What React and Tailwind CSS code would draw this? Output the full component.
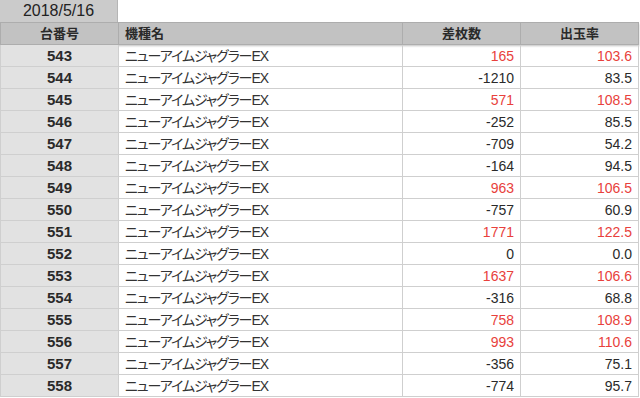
import React from 'react';

const rows = [
  [543, 165, '103.6'],
  [544, -1210, '83.5'],
  [545, 571, '108.5'],
  [546, -252, '85.5'],
  [547, -709, '54.2'],
  [548, -164, '94.5'],
  [549, 963, '106.5'],
  [550, -757, '60.9'],
  [551, 1771, '122.5'],
  [552, 0, '0.0'],
  [553, 1637, '106.6'],
  [554, -316, '68.8'],
  [555, 758, '108.9'],
  [556, 993, '110.6'],
  [557, -356, '75.1'],
  [558, -774, '95.7'],
];

const font = { fontFamily: '"Liberation Sans", "Noto Sans CJK JP", sans-serif' };

export default function App() {
  return (
    <div className="w-[640px] h-[398px] overflow-hidden bg-white text-[14px] text-[#2a2a2a]" style={font}>
      <div className="w-[118px] h-[22px] bg-[#cbcbcb] border-r border-[#b5b5b5] flex items-center justify-center text-[16px] leading-none text-[#222]">
        2018/5/16
      </div>
      <table className="w-[638px] border-collapse table-fixed">
        <colgroup>
          <col className="w-[118px]" />
          <col className="w-[284px]" />
          <col className="w-[118px]" />
          <col className="w-[118px]" />
        </colgroup>
        <thead>
          <tr className="h-[22px] bg-[#c2c2c2] shadow-[0_1px_2px_rgba(0,0,0,0.25)]">
            <th className="border border-[#adadad] text-center font-bold text-[13px] leading-none">台番号</th>
            <th className="border border-[#adadad] text-left pl-[6px] font-bold text-[13px] leading-none">機種名</th>
            <th className="border border-[#adadad] text-center font-bold text-[13px] leading-none">差枚数</th>
            <th className="border border-[#adadad] text-center font-bold text-[13px] leading-none">出玉率</th>
          </tr>
        </thead>
        <tbody>
          {rows.map(([no, diff, rate]) => {
            const red = diff > 0;
            return (
              <tr key={no} className="h-[22px] leading-none">
                <td className="border border-[#cfcfcf] bg-[#e2e2e2] text-center font-bold text-[15px] p-0">{no}</td>
                <td className="border border-[#cfcfcf] pl-[6px] p-0 text-[#333] tracking-[-1.1px] [font-feature-settings:'palt']">ニューアイムジャグラーEX</td>
                <td className={`border border-[#cfcfcf] text-right pr-[6px] p-0 ${red ? 'text-[#e8413c]' : ''}`}>{diff}</td>
                <td className={`border border-[#cfcfcf] text-right pr-[6px] p-0 ${red ? 'text-[#e8413c]' : ''}`}>{rate}</td>
              </tr>
            );
          })}
        </tbody>
      </table>
    </div>
  );
}
